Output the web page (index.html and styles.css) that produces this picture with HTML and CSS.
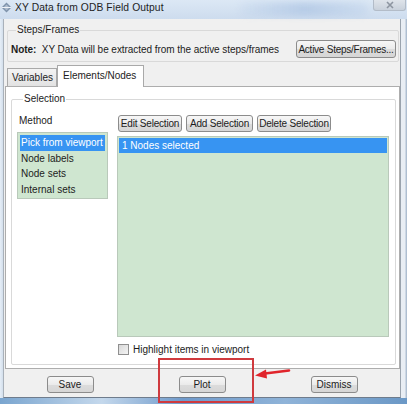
FILE: index.html
```html
<!DOCTYPE html>
<html>
<head>
<meta charset="utf-8">
<link rel="stylesheet" href="styles.css">
</head>
<body>
<div class="window">
  <div class="titlebar">
    <svg class="app-icon" width="11" height="11" viewBox="0 0 11 11">
      <polygon points="5.5,0.5 10.5,5.5 5.5,10.5 0.5,5.5" fill="#7f93ab"/>
      <polygon points="5.5,2.5 8.5,5.5 5.5,8.5 2.5,5.5" fill="#aebdcf"/>
      <line x1="0.5" y1="5.5" x2="10.5" y2="5.5" stroke="#eef2f7" stroke-width="1"/>
    </svg>
    <span class="title">XY Data from ODB Field Output</span>
    <div class="watermark"></div>
    <div class="close">
      <svg width="10" height="8" viewBox="0 0 10 8"><path d="M2 1 L8 7 M8 1 L2 7" stroke="#8d95a0" stroke-width="1.6"/></svg>
    </div>
  </div>
  <div class="frame">
    <div class="edge-left"></div>
    <div class="client">
      <div class="group steps">
        <div class="group-title">Steps/Frames</div>
        <div class="note-row">
          <span class="note"><b>Note:</b>&nbsp; XY Data will be extracted from the active steps/frames</span>
          <button class="btn active-btn">Active Steps/Frames...</button>
        </div>
      </div>
      <div class="tabs">
        <div class="tab">Variables</div>
        <div class="tab current">Elements/Nodes</div>
      </div>
      <div class="panel">
        <div class="group selection">
          <div class="group-title panel-title">Selection</div>
          <div class="sel-body">
            <div class="method-col">
              <div class="method-label">Method</div>
              <ul class="list method-list">
                <li class="sel">Pick from viewport</li>
                <li>Node labels</li>
                <li>Node sets</li>
                <li>Internal sets</li>
              </ul>
            </div>
            <div class="main-col">
              <div class="btn-row">
                <button class="btn small w-edit">Edit Selection</button>
                <button class="btn small w-add">Add Selection</button>
                <button class="btn small w-del">Delete Selection</button>
              </div>
              <ul class="list nodes-list">
                <li class="sel">1 Nodes selected</li>
              </ul>
              <label class="check-row"><span class="checkbox"></span>Highlight items in viewport</label>
            </div>
          </div>
        </div>
      </div>
      <div class="actions">
        <div class="slot"><button class="btn action">Save</button></div>
        <div class="slot"><button class="btn action">Plot</button></div>
        <div class="slot"><button class="btn action">Dismiss</button></div>
      </div>
    </div>
    <div class="edge-right"></div>
  </div>
  <div class="bottom-edge"></div>
  <div class="annot-box"></div>
  <svg class="annot-arrow" width="40" height="16" viewBox="0 0 40 16">
    <path d="M36 4.5 L12 7.5" stroke="#e0242b" stroke-width="2.6" stroke-linecap="round"/>
    <polygon points="2,9.5 13,3.5 14,12.5" fill="#e0242b"/>
  </svg>
</div>
</body>
</html>
```

FILE: styles.css
```css
* { box-sizing: border-box; }
html, body {
  margin: 0;
  padding: 0;
  width: 407px;
  height: 404px;
  overflow: hidden;
  background: #f0f0f0;
}
body {
  font-family: "Liberation Sans", Arial, sans-serif;
  font-size: 10px;
  color: #1c1c1c;
}
.window {
  position: relative;
  width: 407px;
  height: 404px;
  display: flex;
  flex-direction: column;
  background: #d6e3f1;
}
.titlebar {
  height: 19px;
  display: flex;
  align-items: flex-start;
  padding: 2px 0 0 1px;
  background: linear-gradient(#dce8f5, #cddcee);
  position: relative;
}
.app-icon { flex: none; }
.title {
  margin-left: 3px;
  font-size: 10.3px;
  line-height: 11px;
  color: #1e1e1e;
  letter-spacing: 0.1px;
}
.watermark {
  margin-left: auto;
  width: 130px;
  height: 14px;
  border-radius: 7px;
  background: linear-gradient(90deg, rgba(170,195,228,0.1), rgba(150,180,220,0.45), rgba(170,195,228,0.2));
  filter: blur(3px);
}
.close {
  margin-left: 4px;
  margin-top: -2px;
  width: 33px;
  height: 11px;
  margin-right: 1px;
  background: linear-gradient(#dfe4ea, #c9d1db);
  border: 1px solid #b3bcc8;
  border-top: none;
  border-radius: 0 0 3px 3px;
  display: flex;
  align-items: center;
  justify-content: center;
}
.frame {
  flex: 1;
  display: flex;
}
.edge-left {
  width: 3px;
  background: linear-gradient(90deg, #e6eef7, #d3dfec);
}
.edge-right {
  width: 6px;
  background: linear-gradient(90deg, #e9eef4 0, #e9eef4 60%, #9fb2c8 100%);
}
.client {
  flex: 1;
  background: #f0f0f0;
  border-left: 1px solid #a9b1ba;
  border-right: 1px solid #9aa3ad;
  border-bottom: 1px solid #6f7c8c;
  display: flex;
  flex-direction: column;
}
.bottom-edge {
  height: 6px;
  background: linear-gradient(90deg, #7aa5cf, #c4d8ec 25%, #6f9acb 45%, #8fb3d8 70%, #6b98c6);
}

/* group boxes */
.group {
  border: 1px solid #d9d9d9;
  border-radius: 2px;
}
.group-title {
  width: fit-content;
  line-height: 12px;
  margin-top: -7px;
  margin-left: 5px;
  padding: 0 1px;
  background: #f0f0f0;
}
.steps {
  margin: 11px 1px 0 3px;
  padding: 0 2px 3px 3px;
}
.note-row {
  display: flex;
  align-items: center;
  justify-content: space-between;
  margin-top: 4px;
}
.note { white-space: nowrap; letter-spacing: -0.05px; }
.note b { font-weight: bold; }

/* buttons */
.btn {
  font-family: "Liberation Sans", Arial, sans-serif;
  font-size: 10px;
  color: #1c1c1c;
  background: linear-gradient(#f7f7f7, #ebebeb 50%, #dcdcdc 51%, #d6d6d6);
  border: 1px solid #8c8c8c;
  border-radius: 3px;
  padding: 0 3px;
  margin: 0;
  white-space: nowrap;
  text-align: center;
}
.active-btn {
  height: 18px;
  width: 100px;
  padding: 0;
  letter-spacing: -0.25px;
}
.small {
  height: 17px;
  padding: 0;
  letter-spacing: -0.2px;
}
.w-edit { width: 64px; }
.w-add { width: 67px; }
.w-del { width: 74px; }
.action {
  height: 17px;
  width: 47px;
}

/* tabs */
.tabs {
  display: flex;
  align-items: flex-end;
  margin: 3px 0 0 3px;
  height: 21px;
}
.tab {
  height: 18px;
  line-height: 17px;
  padding: 0 4px;
  width: 50px;
  border: 1px solid #a9a9a9;
  border-bottom: none;
  background: linear-gradient(#f3f3f3, #e2e2e2);
}
.tab.current {
  height: 22px;
  width: 87px;
  margin-bottom: -1px;
  line-height: 20px;
  padding: 0 0 0 5px;
  background: #ffffff;
  position: relative;
  z-index: 1;
}
.panel {
  margin: 0 0 0 1px;
  height: 283px;
  border: 1px solid #adadad;
  background: #ffffff;
  padding: 12px 3px 3px 5px;
}
.selection {
  height: 100%;
  padding: 0 6px 0 5px;
}
.panel-title { background: #ffffff; margin-left: 6px; }
.sel-body {
  display: flex;
  gap: 9px;
}
.method-col {
  width: 91px;
  padding-top: 10px;
}
.method-label {
  line-height: 12px;
  padding-left: 2px;
}
.list {
  list-style: none;
  margin: 0;
  padding: 2px 2px 0 2px;
  background: #cfe6d0;
  border: 1px solid #b9c9ba;
}
.list li {
  line-height: 15.5px;
  padding-left: 1px;
  white-space: nowrap;
}
.list li.sel {
  background: #3794f2;
  color: #ffffff;
}
.method-list {
  margin-top: 5px;
  height: 67px;
}
.main-col {
  flex: 1;
  padding-top: 10px;
}
.btn-row {
  display: flex;
  gap: 4px;
  margin-left: 1px;
}
.nodes-list {
  margin-top: 4px;
  height: 201px;
  padding: 1px 1px 0 1px;
}
.nodes-list li { line-height: 15px; padding-left: 3px; }
.check-row {
  display: flex;
  align-items: center;
  margin-top: 6px;
  margin-left: 1px;
  height: 13px;
  gap: 4px;
}
.checkbox {
  width: 11px;
  height: 11px;
  border: 1px solid #8f8f8f;
  background: linear-gradient(135deg, #d8d8d8, #f4f4f4);
}

/* bottom actions */
.actions {
  display: grid;
  grid-template-columns: 1fr 1fr 1fr;
  margin-top: 7px;
}
.slot {
  display: flex;
  justify-content: center;
}

/* annotation overlay */
.annot-box {
  position: absolute;
  left: 158px;
  top: 358px;
  width: 96px;
  height: 45px;
  border: 2px solid #cf3a3e;
}
.annot-arrow {
  position: absolute;
  left: 253px;
  top: 366px;
}
```
